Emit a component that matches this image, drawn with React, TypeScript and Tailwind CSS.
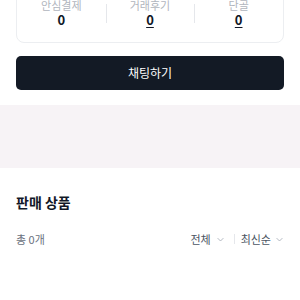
function Chevron() {
  return (
    <svg width="9" height="9" viewBox="0 0 24 24" fill="none" stroke="#9ca3af" strokeWidth="2" strokeLinecap="round" strokeLinejoin="round">
      <path d="M5 9l7 7 7-7" />
    </svg>
  );
}

export default function App() {
  const stats = [
    { label: '안심결제', value: '0', link: false },
    { label: '거래후기', value: '0', link: true },
    { label: '단골', value: '0', link: true },
  ];

  return (
    <div className="w-[300px] h-[300px] overflow-hidden bg-white" style={{ fontFamily: '"Noto Sans CJK KR", "Noto Sans", sans-serif' }}>
      <div className="px-4">
        <div className="mt-[-19px] border border-[#eceef1] rounded-lg pt-4 pb-[14px] grid grid-cols-3">
          {stats.map((s, i) => (
            <div key={s.label} className="relative flex flex-col items-center">
              {i > 0 && <span className="absolute left-0 top-[6px] h-[19px] w-px bg-[#e5e7eb]"></span>}
              <span className="text-[11px] leading-[14px] text-[#b0b5bd]">{s.label}</span>
              <span className={`text-[13px] leading-4 font-bold text-[#111827] ${s.link ? 'underline underline-offset-2' : ''}`}>{s.value}</span>
            </div>
          ))}
        </div>
        <button className="mt-[13px] w-full h-[34px] rounded-[5px] bg-[#131a25] text-white text-[12px] font-normal">채팅하기</button>
      </div>
      <div className="mt-[15px] h-[63px] bg-[#f7f3f6]"></div>
      <div className="px-4">
        <h2 className="mt-[24px] text-[14px] leading-5 font-bold text-[#111827]">판매 상품</h2>
        <div className="mt-[19px] flex items-center justify-between">
          <span className="text-[11px] leading-4 text-[#6b7280]">총 0개</span>
          <div className="flex items-center text-[11px] leading-4 text-[#4b5563]">
            <span className="flex items-center gap-[5px]">전체 <Chevron /></span>
            <span className="ml-[9px] mr-[6px] h-[10px] w-px bg-[#e5e7eb]"></span>
            <span className="flex items-center gap-[4px]">최신순 <Chevron /></span>
          </div>
        </div>
      </div>
    </div>
  );
}
